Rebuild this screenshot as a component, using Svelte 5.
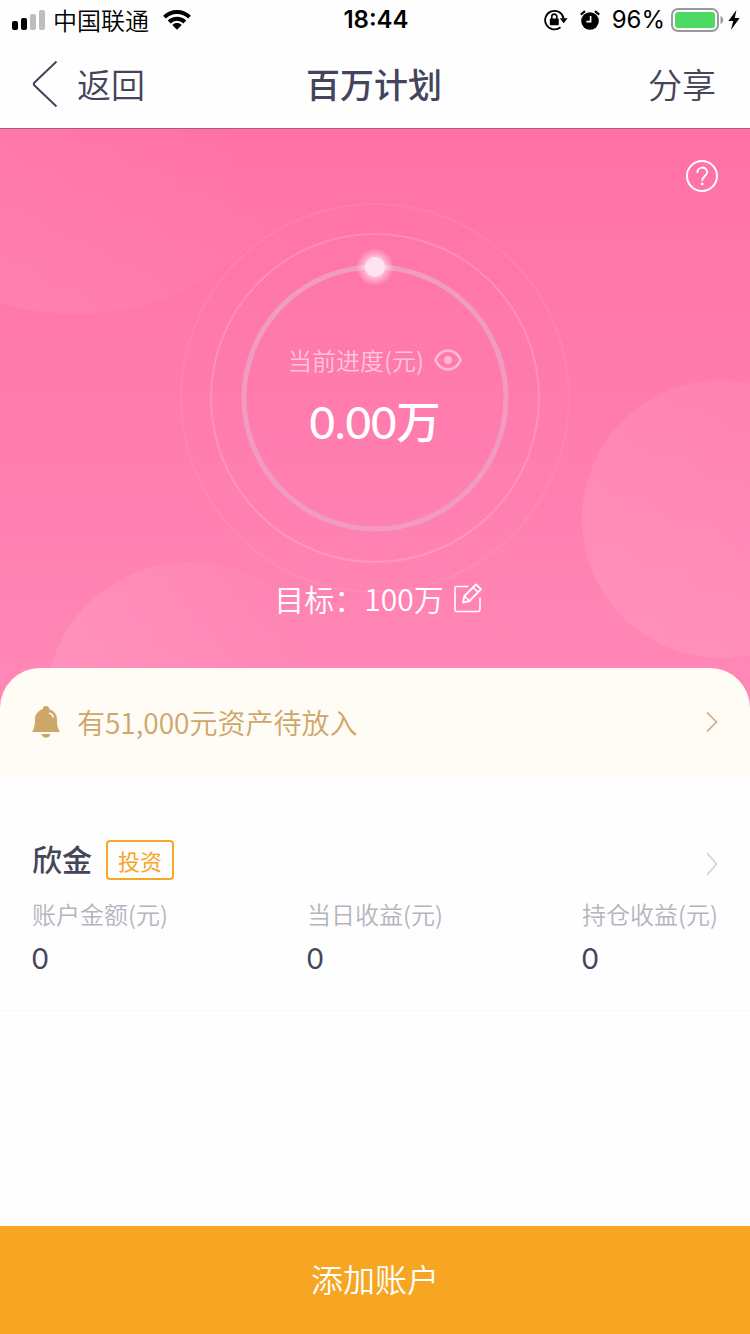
<script>
    export let carrier = "中国联通";
    export let time = "18:44";
    export let battery = 96;
    export let title = "百万计划";
    export let progress = "0.00";
    export let goal = "100";
    export let pending = "51,000";

    let hidden = false;

    let accounts = [
        {
            name: "欣金",
            tag: "投资",
            stats: [
                { label: "账户金额(元)", value: "0" },
                { label: "当日收益(元)", value: "0" },
                { label: "持仓收益(元)", value: "0" },
            ],
        },
    ];
</script>

<div class="page">
    <div class="status">
        <div class="status-side">
            <svg class="signal" width="34" height="20" viewBox="0 0 34 20">
                <rect x="0" y="11" width="6" height="9" rx="2" />
                <rect x="9" y="8" width="6" height="12" rx="2" />
                <rect x="18" y="4" width="6" height="16" rx="2" fill="#bdbdbd" />
                <rect x="27" y="0" width="6" height="20" rx="2" fill="#bdbdbd" />
            </svg>
            <span class="carrier">{carrier}</span>
            <svg width="28" height="20" viewBox="0 0 28 20">
                <g fill="none" stroke="#000" stroke-width="4">
                    <path d="M1.5 7.2C8.4.4 19.6.4 26.5 7.2" />
                    <path d="M6.2 12c4.3-4.2 11.3-4.2 15.6 0" />
                </g>
                <path d="M9.3 14.9c2.7-2.6 6.7-2.6 9.4 0L14 19.8z" />
            </svg>
        </div>
        <span class="time">{time}</span>
        <div class="status-side right">
            <svg class="lock" width="24" height="22" viewBox="0 0 24 22">
                <path
                    d="M16.5 18.2A9.3 9.3 0 1 1 19.6 9.5"
                    fill="none"
                    stroke="#000"
                    stroke-width="1.8"
                />
                <path d="M15.8 9.2h7.8l-3.9 5z" />
                <rect x="5.8" y="9.4" width="9" height="6.8" rx="1" />
                <path
                    d="M7.8 10V7.6a2.5 2.5 0 0 1 5 0V10"
                    fill="none"
                    stroke="#000"
                    stroke-width="1.6"
                />
            </svg>
            <svg class="alarm" width="20" height="20" viewBox="0 0 20 20">
                <circle cx="10" cy="11" r="8.8" />
                <path d="M.8 4.6L5 1.2M19.2 4.6L15 1.2" stroke="#000" stroke-width="2.2" />
                <path d="M10.6 6v5.6H6.4" fill="none" stroke="#fff" stroke-width="1.6" />
            </svg>
            <span class="percent">{battery}%</span>
            <svg width="54" height="24" viewBox="0 0 54 24">
                <rect
                    x="1"
                    y="1"
                    width="46"
                    height="22"
                    rx="6"
                    fill="none"
                    stroke="#9b9b9b"
                    stroke-width="2"
                />
                <rect x="4" y="4" width="40" height="16" rx="3" fill="#4cd964" />
                <path d="M49.5 8c3.6 1.2 3.6 6.8 0 8z" fill="#9b9b9b" />
            </svg>
            <svg class="bolt" width="12" height="20" viewBox="0 0 12 20">
                <path d="M8.4 0L.4 11h4.8L3 20 11.6 8H6.8z" />
            </svg>
        </div>
    </div>

    <header class="nav">
        <button class="nav-btn">
            <svg width="26" height="48" viewBox="0 0 26 48">
                <path
                    d="M24.5 1.5L2.5 22.5q-1.5 1.5 0 3L24.5 46.5"
                    fill="none"
                    stroke="#44445a"
                    stroke-width="2"
                />
            </svg>
            返回
        </button>
        <h1>{title}</h1>
        <button class="nav-btn share">分享</button>
    </header>

    <section class="hero">
        <i class="bubble bubble-top"></i>
        <i class="bubble bubble-right"></i>
        <i class="bubble bubble-bottom"></i>

        <button class="help" aria-label="帮助">
            <svg width="32" height="32" viewBox="0 0 32 32" fill="none" stroke="#fff">
                <circle cx="16" cy="16" r="15" stroke-width="2" />
                <path
                    d="M11.3 12.8c0-6.8 9.8-6.8 9.8-.6 0 3.7-4.9 4-4.9 8.6"
                    stroke-width="2"
                />
                <circle cx="16.2" cy="24" r="1.4" fill="#fff" stroke="none" />
            </svg>
        </button>

        <div class="gauge">
            <svg class="rings" width="332" height="332" viewBox="0 0 332 332">
                <defs>
                    <radialGradient id="glow">
                        <stop offset="45%" stop-color="#fff" stop-opacity=".6" />
                        <stop offset="100%" stop-color="#fff" stop-opacity="0" />
                    </radialGradient>
                </defs>
                <g fill="none">
                    <circle cx="166" cy="166" r="194" stroke="#fff" stroke-opacity=".07" stroke-width="2" />
                    <circle cx="166" cy="166" r="164" stroke="#fff" stroke-opacity=".17" stroke-width="2" />
                    <circle cx="166" cy="166" r="131" stroke="#f19bc1" stroke-width="5" />
                </g>
                <circle cx="166" cy="35" r="19" fill="url(#glow)" />
                <circle cx="166" cy="35" r="10" fill="#ffe3ef" />
            </svg>
            <div class="gauge-text">
                <div class="caption">
                    当前进度(元)
                    <button aria-label="显示或隐藏金额" on:click={() => (hidden = !hidden)}>
                        <svg width="28" height="22" viewBox="0 0 28 22">
                            <path
                                d="M1.5 11C6.5-1.5 21.5-1.5 26.5 11 21.5 23.5 6.5 23.5 1.5 11z"
                                fill="none"
                                stroke="#ffb5d3"
                                stroke-width="2.6"
                            />
                            <circle cx="14" cy="11" r="4.2" fill="#ffb5d3" />
                        </svg>
                    </button>
                </div>
                <strong>{hidden ? "****" : progress + "万"}</strong>
            </div>
        </div>

        <div class="goal">
            目标：{goal}万
            <button aria-label="修改目标">
                <svg width="28" height="30" viewBox="0 0 28 30" fill="none" stroke="#fff">
                    <path d="M14 3.5H3Q1 3.5 1 5.5v21q0 2 2 2h21q2 0 2-2V14.5" stroke-width="1.6" />
                    <path
                        d="M9 19.5l1.4-6.5L22 1.5l5 4.6L15.5 18z"
                        stroke-width="1.8"
                        stroke-linejoin="round"
                    />
                    <path d="M19 4.5l5 4.6M10.4 13l5.1 5" stroke-width="1.5" />
                </svg>
            </button>
        </div>
    </section>

    <main>
        <a class="notice" href="#pending">
            <svg width="28" height="32" viewBox="0 0 28 32" fill="#cda66a">
                <path
                    d="M14 0c2 0 3.2 1.2 3.2 3.2C22 4.5 25 8.300 25 13.5c0 7 .8 9 3 12.5H0c2.2-3.5 3-5.5 3-12.5C3 8.300 6 4.5 10.8 3.2 10.8 1.2 12 0 14 0z"
                />
                <path d="M9.5 28h9c-.8 5-8.200 5-9 0z" />
                <path d="M17 7c2.4.6 4 2.2 4.4 4.6" fill="none" stroke="#fff" stroke-width="1.4" />
            </svg>
            <span>有{pending}元资产待放入</span>
            <svg class="arrow" width="12" height="20" viewBox="0 0 12 20">
                <path d="M1 .5L10.500 10 1 19.500" fill="none" stroke="#cdaa85" stroke-width="1.6" />
            </svg>
        </a>

        {#each accounts as account (account.name)}
            <a class="account" href="#account">
                <div class="account-head">
                    <h2>{account.name}</h2>
                    <span class="tag">{account.tag}</span>
                    <svg class="arrow" width="12" height="32" viewBox="0 0 12 32">
                        <path d="M1 5L10.500 16 1 27" fill="none" stroke="#d2d2d6" stroke-width="1.6" />
                    </svg>
                </div>
                <dl>
                    {#each account.stats as stat (stat.label)}
                        <div>
                            <dt>{stat.label}</dt>
                            <dd>{stat.value}</dd>
                        </div>
                    {/each}
                </dl>
            </a>
        {/each}
    </main>

    <button class="add">添加账户</button>
</div>

<style>
    :global(body) {
        margin: 0;
    }

    .page {
        display: flex;
        flex-direction: column;
        min-height: 100vh;
        background-color: #fefefe;
        color: #44445a;
        font-family: "Noto Sans CJK SC", "Noto Sans", sans-serif;
        font-weight: 350;
    }

    button {
        padding: 0;
        border: none;
        background: none;
        color: inherit;
        font: inherit;
        cursor: pointer;
    }

    a {
        color: inherit;
        text-decoration: none;
    }

    svg {
        display: block;
        flex-shrink: 0;
    }

    .status {
        display: flex;
        align-items: center;
        height: 40px;
        padding: 0 10px 0 12px;
        color: #000;
        font-size: 24px;
        line-height: 40px;
    }

    .status-side {
        display: flex;
        flex: 1;
        align-items: center;
    }

    .status-side.right {
        justify-content: flex-end;
    }

    .carrier {
        margin: 0 14px 0 7px;
    }

    .time,
    .percent {
        font-family: Inter, sans-serif;
        line-height: 42px;
    }

    .time {
        font-weight: 600;
    }

    .percent {
        margin: 0 6px 0 12px;
        font-weight: 400;
    }

    .lock {
        margin-right: 12px;
    }

    .bolt {
        margin-left: 3px;
    }

    .nav {
        display: flex;
        align-items: center;
        justify-content: space-between;
        height: 88px;
        padding: 0 34px 0 32px;
        font-size: 34px;
        line-height: 48px;
    }

    .nav-btn {
        display: flex;
        flex: 1;
        align-items: center;
        gap: 19px;
    }

    .nav-btn.share {
        justify-content: flex-end;
    }

    h1,
    h2,
    dl,
    dd {
        margin: 0;
    }

    h1 {
        font-size: 34px;
        font-weight: 500;
    }

    .hero {
        position: relative;
        display: flex;
        flex-direction: column;
        align-items: center;
        overflow: hidden;
        box-sizing: border-box;
        padding: 31px 32px 92px;
        border-top: 1px solid #b5547f;
        background: linear-gradient(#ff71a5, #ff88b6);
        color: #fff;
    }

    .bubble {
        position: absolute;
        border-radius: 50%;
    }

    .bubble-top {
        top: -335px;
        left: -185px;
        width: 520px;
        height: 520px;
        background: linear-gradient(60deg, rgba(255, 255, 255, 0.07) 20%, transparent 65%);
    }

    .bubble-right {
        top: 251px;
        right: -110px;
        width: 278px;
        height: 278px;
        background: linear-gradient(60deg, rgba(255, 255, 255, 0.1), rgba(255, 255, 255, 0.03));
    }

    .bubble-bottom {
        top: 433px;
        left: 45px;
        width: 290px;
        height: 290px;
        background: linear-gradient(90deg, rgba(255, 255, 255, 0.1), transparent 90%);
    }

    .help {
        z-index: 1;
        align-self: flex-end;
    }

    .gauge {
        display: grid;
        place-items: center;
        margin-top: 40px;
    }

    .rings,
    .gauge-text {
        grid-area: 1 / 1;
    }

    .rings {
        overflow: visible;
    }

    .gauge-text {
        z-index: 1;
        display: flex;
        flex-direction: column;
        align-items: center;
        gap: 16px;
        padding-bottom: 4px;
    }

    .caption,
    .goal {
        display: flex;
        align-items: center;
        gap: 10px;
    }

    .caption {
        color: #ffc5dc;
        font-size: 24px;
        line-height: 36px;
    }

    /* Lato has the rounder figures used for amounts */
    strong,
    dd {
        font-family: Lato, "Noto Sans CJK SC", sans-serif;
    }

    strong {
        font-size: 44px;
        font-weight: 500;
        line-height: 56px;
    }

    .goal {
        z-index: 1;
        margin-top: 16px;
        padding-left: 6px;
        font-size: 30px;
        line-height: 36px;
    }

    main {
        position: relative;
        flex: 1;
        margin-top: -40px;
    }

    .notice {
        display: flex;
        align-items: center;
        height: 108px;
        padding: 0 32px;
        border-radius: 40px 40px 0 0;
        background-color: #fffbf5;
        color: #cda66a;
        font-size: 28px;
    }

    .notice span {
        margin-left: 17px;
    }

    .arrow {
        margin-left: auto;
    }

    .account {
        display: block;
        padding: 64px 32px 32px;
        border-bottom: 1px solid #f8f8fa;
    }

    .account-head {
        display: flex;
        align-items: flex-end;
    }

    h2 {
        padding-bottom: 4px;
        font-size: 30px;
        font-weight: 500;
        line-height: 36px;
    }

    .tag {
        margin-left: 14px;
        padding: 0 10px;
        border: 2px solid #f6a623;
        border-radius: 4px;
        color: #f6a623;
        font-size: 22px;
        font-weight: 400;
        line-height: 36px;
    }

    dl {
        display: flex;
        justify-content: space-between;
        margin-top: 16px;
    }

    dt {
        color: #b4b4be;
        font-size: 24px;
        line-height: 36px;
    }

    dd {
        margin-top: 6px;
        font-size: 28px;
        font-weight: 400;
        line-height: 40px;
    }

    .add {
        height: 108px;
        padding-bottom: 4px;
        background-color: #f6a623;
        color: #fff;
        font-size: 32px;
    }
</style>
